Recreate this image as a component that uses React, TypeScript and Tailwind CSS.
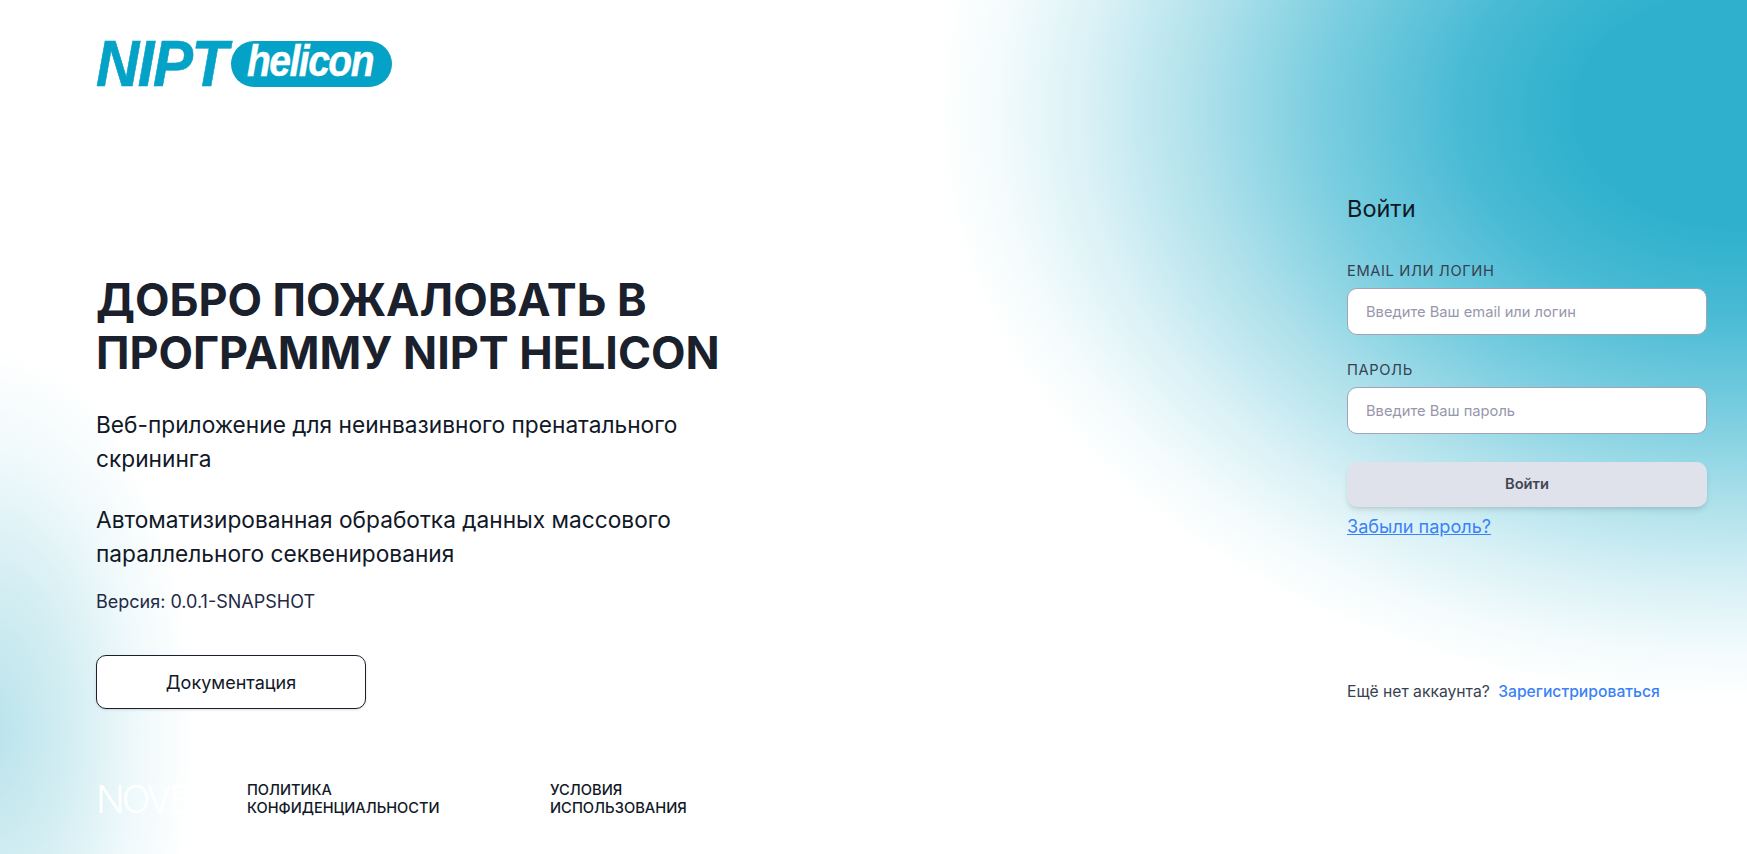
import React from "react";

const Logo = () => (
  <div className="flex items-center h-[47px] font-['Liberation_Sans',sans-serif] text-[#04a2c6]">
    <span className="w-[135px] text-[60px] leading-none font-bold italic tracking-[-1.5px] scale-y-[1.08] [-webkit-text-stroke:0.6px_#04a2c6]">NIPT</span>
    <div className="flex items-center justify-center w-[161px] h-[46px] rounded-full bg-[#04a2c6] text-white">
      <span className="text-[39px] leading-none font-bold italic tracking-[-1.5px] -mt-[7px] -ml-[3px] scale-y-[1.15] [-webkit-text-stroke:0.4px_#ffffff]">helicon</span>
    </div>
  </div>
);

const Field = ({ label, placeholder }: { label: string; placeholder: string }) => (
  <label className="block">
    <span className="block text-[14.7px] leading-5 tracking-[0.6px] uppercase text-[#374151]">{label}</span>
    <input
      placeholder={placeholder}
      className="mt-[7px] block w-full h-[47px] px-[18px] rounded-[10px] bg-white border border-[#a3a3b8] text-[14.7px] outline-none placeholder:text-[#9797ab]"
    />
  </label>
);

export default function App() {
  return (
    <div className="w-full h-[854px] overflow-hidden flex justify-between font-['Inter',sans-serif] text-[#111827] bg-white bg-[radial-gradient(ellipse_800px_590px_at_1735px_110px,#2fb1cd_0%,#2fb1cd_20%,#48bad4_34%,#7bcee0_52%,#afe1eb_67%,#d9f1f6_81%,#f3fbfc_92%,#ffffff_100%),radial-gradient(ellipse_205px_380px_at_-10px_730px,#b9e3eb_0%,#d4eef3_40%,#eff9fb_72%,#ffffff_100%)] bg-blend-multiply">
      <div className="w-[700px] ml-24 flex flex-col">
        <div className="pt-10">
          <Logo />
        </div>
        <h1 className="mt-[187px] text-[44.8px] leading-[53px] font-bold text-[#1a202c]">
          ДОБРО ПОЖАЛОВАТЬ В<br />ПРОГРАММУ NIPT HELICON
        </h1>
        <p className="mt-[28px] text-[22.7px] leading-[34px] w-[640px]">Веб-приложение для неинвазивного пренатального скрининга</p>
        <p className="mt-[27px] text-[22.7px] leading-[34px] w-[640px]">Автоматизированная обработка данных массового параллельного секвенирования</p>
        <p className="mt-[19px] text-lg leading-6 text-[#1f2a44]">Версия: 0.0.1-SNAPSHOT</p>
        <button className="mt-[41px] w-[270px] h-[54px] rounded-[10px] bg-white border border-[#1a202c] text-lg pt-[2px] shadow-sm">Документация</button>
        <div className="mt-[72px] flex items-center">
          <div className="w-[151px] h-7 text-[38px] leading-7 font-light text-white tracking-[-3px]">NOVE</div>
          <a className="w-[303px] text-[14.6px] leading-[18px] font-medium uppercase text-[#111827]">Политика<br />конфиденциальности</a>
          <a className="text-[14.7px] leading-[18px] font-medium uppercase text-[#111827]">Условия<br />использования</a>
        </div>
      </div>
      <div className="w-[360px] mr-10 flex flex-col">
        <h2 className="mt-[193px] text-[23.5px] leading-8">Войти</h2>
        <div className="mt-[36px] flex flex-col gap-[25px]">
          <Field label="Email или логин" placeholder="Введите Ваш email или логин" />
          <Field label="Пароль" placeholder="Введите Ваш пароль" />
        </div>
        <button className="mt-[28px] h-[45px] rounded-[10px] bg-[#dfe2ea] text-[14.7px] font-semibold text-[#404654] shadow-md">Войти</button>
        <a className="mt-[5px] text-[18.1px] leading-7 text-[#3b82f6] underline">Забыли пароль?</a>
        <p className="mt-[140px] text-[15.7px] leading-6 text-[#374151]">
          Ещё нет аккаунта? <a className="ml-1 font-medium text-[#3b82f6]">Зарегистрироваться</a>
        </p>
      </div>
    </div>
  );
}
